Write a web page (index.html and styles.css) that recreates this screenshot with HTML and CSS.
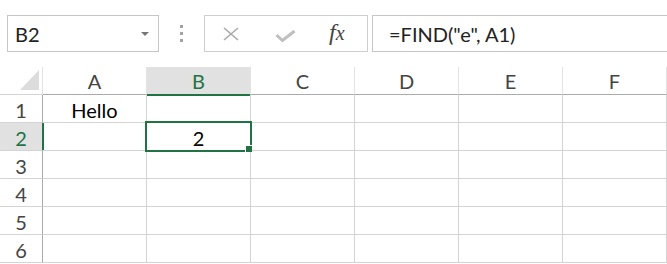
FILE: index.html
```html
<!DOCTYPE html>
<html lang="en">
<head>
    <meta charset="UTF-8">
    <title>Sheet1</title>
    <link rel="stylesheet" href="styles.css">
</head>
<body>
    <div class="toolbar">
        <div class="name-box">
            <span>B2</span>
            <span class="caret"></span>
        </div>
        <div class="grip">
            <span></span><span></span><span></span>
        </div>
        <div class="fx-buttons">
            <svg class="icon-cancel" width="18" height="14" viewBox="0 0 18 14">
                <path d="M2 1 L16 13 M16 1 L2 13" stroke="#a9a9a9" stroke-width="1.6" fill="none"/>
            </svg>
            <svg class="icon-enter" width="21" height="12" viewBox="0 0 21 12">
                <path d="M1.5 5 L7.5 10.5 L19.5 1" stroke="#bfbfbf" stroke-width="3" fill="none"/>
            </svg>
            <span class="fx">f<span>x</span></span>
        </div>
        <div class="formula">=FIND("e", A1)</div>
    </div>

    <div class="sheet">
        <div class="cell corner"><span class="tri"></span></div>
        <div class="cell col-head">A</div>
        <div class="cell col-head active">B</div>
        <div class="cell col-head">C</div>
        <div class="cell col-head">D</div>
        <div class="cell col-head">E</div>
        <div class="cell col-head">F</div>

        <div class="cell row-head">1</div>
        <div class="cell">Hello</div>
        <div class="cell"></div>
        <div class="cell"></div>
        <div class="cell"></div>
        <div class="cell"></div>
        <div class="cell"></div>

        <div class="cell row-head active">2</div>
        <div class="cell"></div>
        <div class="cell">2</div>
        <div class="cell"></div>
        <div class="cell"></div>
        <div class="cell"></div>
        <div class="cell"></div>

        <div class="cell row-head">3</div>
        <div class="cell"></div>
        <div class="cell"></div>
        <div class="cell"></div>
        <div class="cell"></div>
        <div class="cell"></div>
        <div class="cell"></div>

        <div class="cell row-head">4</div>
        <div class="cell"></div>
        <div class="cell"></div>
        <div class="cell"></div>
        <div class="cell"></div>
        <div class="cell"></div>
        <div class="cell"></div>

        <div class="cell row-head">5</div>
        <div class="cell"></div>
        <div class="cell"></div>
        <div class="cell"></div>
        <div class="cell"></div>
        <div class="cell"></div>
        <div class="cell"></div>

        <div class="cell row-head">6</div>
        <div class="cell"></div>
        <div class="cell"></div>
        <div class="cell"></div>
        <div class="cell"></div>
        <div class="cell"></div>
        <div class="cell"></div>

        <div class="selection"><span class="handle"></span></div>
    </div>
</body>
</html>
```

FILE: styles.css
```css
body {
    margin: 0;
    padding: 0;
    background-color: white;
    font-family: Lato, "Open Sans", sans-serif;
    color: #000;
    overflow: hidden;
}
.toolbar {
    display: flex;
    align-items: stretch;
    height: 37px;
    margin-top: 15px;
    padding-left: 7px;
}
.name-box {
    box-sizing: border-box;
    width: 152px;
    border: 1px solid #c6c6c6;
    display: flex;
    align-items: center;
    justify-content: space-between;
    padding: 0 9px 0 7px;
    font-size: 20px;
    color: #222;
}
.caret {
    width: 0;
    height: 0;
    border-left: 4px solid transparent;
    border-right: 4px solid transparent;
    border-top: 4px solid #777;
}
.grip {
    width: 45px;
    display: flex;
    flex-direction: column;
    align-items: center;
    justify-content: center;
    gap: 4px;
}
.grip span {
    width: 3px;
    height: 3px;
    background-color: #a3a3a3;
}
.fx-buttons {
    box-sizing: border-box;
    width: 164px;
    border: 1px solid #cfcfcf;
    display: flex;
    align-items: center;
    padding-left: 17px;
}
.icon-cancel {
    margin-top: 1px;
}
.icon-enter {
    margin-left: 35px;
    margin-top: 4px;
}
.fx {
    margin-left: 33px;
    font-family: "Liberation Serif", serif;
    font-style: italic;
    font-size: 24px;
    color: #444;
    margin-top: -2px;
}
.fx span {
    font-size: 20px;
}
.formula {
    box-sizing: border-box;
    flex: 1;
    margin-left: 4px;
    margin-right: -10px;
    border: 1px solid #c6c6c6;
    display: flex;
    align-items: center;
    padding-left: 16px;
    font-size: 20px;
    color: #222;
}
.sheet {
    position: relative;
    margin-top: 15px;
    display: grid;
    grid-template-columns: 43px repeat(6, 104px);
    grid-template-rows: repeat(7, 28px);
}
.cell {
    box-sizing: border-box;
    border-right: 1px solid #d4d4d4;
    border-bottom: 1px solid #d4d4d4;
    display: flex;
    align-items: flex-end;
    justify-content: center;
    font-size: 20px;
    line-height: 22px;
    padding-bottom: 1px;
}
.corner {
    position: relative;
    border-right-color: #e3e3e3;
    border-bottom-color: #d4d4d4;
}
.tri {
    position: absolute;
    left: 20px;
    top: 3px;
    width: 0;
    height: 0;
    border-left: 19px solid transparent;
    border-bottom: 20px solid #dcdcdc;
}
.col-head {
    border-right-color: #e3e3e3;
    border-bottom-color: #ababab;
    color: #444;
    padding-bottom: 2px;
}
.col-head.active {
    background-color: #e1e1e1;
    border-bottom: 2px solid #217346;
    margin-bottom: -1px;
    color: #217346;
}
.row-head {
    border-right-color: #ababab;
    color: #444;
}
.row-head.active {
    background-color: #e1e1e1;
    border-right: 2px solid #217346;
    margin-right: -1px;
    color: #217346;
}
.selection {
    position: absolute;
    left: 145px;
    top: 54px;
    width: 107px;
    height: 31px;
    box-sizing: border-box;
    border: 2px solid #217346;
}
.handle {
    position: absolute;
    right: -2px;
    bottom: -2px;
    width: 6px;
    height: 6px;
    background-color: #217346;
    border-left: 1px solid white;
    border-top: 1px solid white;
}
```
